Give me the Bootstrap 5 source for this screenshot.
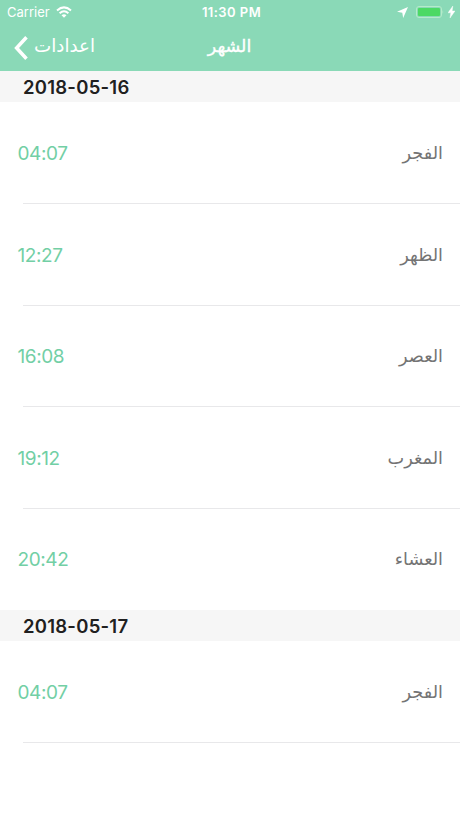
<!DOCTYPE html>
<html lang="ar">
<head>
<meta charset="utf-8">
<meta name="viewport" content="width=device-width, initial-scale=1">
<title>الشهر</title>
<link href="https://cdn.jsdelivr.net/npm/bootstrap@5.3.0/dist/css/bootstrap.min.css" rel="stylesheet">
<style>
body{font-family:Inter,"DejaVu Sans",sans-serif;background:#fff;height:818px;overflow:hidden}
.app-top{background:#8ad9b7;color:#fff;height:71px}
.status{height:24px;font-size:13px;line-height:24px;padding:0 5px 0 7px}
.status>div{flex:1 1 0}
.clock{font-weight:600;font-size:13px;letter-spacing:.45px;padding-left:1px}
.wifi{margin-left:6px}
.titlebar{height:47px;padding:0 15px 0 14px}
.titlebar>div{flex:1 1 0}
.ar{font-family:"DejaVu Sans",sans-serif;white-space:nowrap}
.back-label{font-size:18.3px;line-height:24px;margin:-3px 0 0 6px}
.screen-title{font-size:17.5px;font-weight:400;line-height:24px;-webkit-text-stroke:.35px #fff;padding-bottom:4px}
.day{height:31px;background:#f6f6f6;padding-left:23px;font-size:18.5px;font-weight:600;letter-spacing:.24px;line-height:32px;color:#202020;margin:0}
.prayer{height:101.5px;padding:2px 17px 0;position:relative}
.prayer-line::after{content:"";position:absolute;left:23px;right:0;bottom:-.5px;height:1px;background:#e8e8ea}
.hour{color:#72cfa5;font-size:19px;letter-spacing:-.4px;line-height:28px;padding-left:.5px}
.prayer .hour{padding-top:1px}
.name{color:#747474;font-size:17.7px;line-height:28px;padding-bottom:1px}
</style>
<script src="https://cdn.jsdelivr.net/npm/bootstrap@5.3.0/dist/js/bootstrap.bundle.min.js"></script>
</head>
<body>
<header class="app-top">
  <div class="status d-flex align-items-center">
    <div class="d-flex align-items-center"><span>Carrier</span>
      <svg class="wifi" width="16" height="12" viewBox="0 0 16 12" fill="none" stroke="#fff" stroke-width="2"><path d="M1 4.4Q8-1.6 15 4.4M3.6 7.2Q8 3.4 12.4 7.2"/><path d="M8 11.8 5.5 9.2Q8 7.2 10.5 9.2Z" fill="#fff" stroke="none"/></svg>
    </div>
    <span class="clock">11:30 PM</span>
    <div class="d-flex align-items-center justify-content-end">
      <svg class="me-2" width="11" height="11" viewBox="0 0 10 10"><path d="M10 0 5.6 10 4.8 5.3 0 4.4Z" fill="#fff"/></svg>
      <svg width="28" height="12" viewBox="0 0 28 12"><rect x=".5" y=".5" width="25" height="11" rx="2.5" fill="none" stroke="#b5ebc9"/><rect x="2" y="2" width="22" height="8" rx="1" fill="#4cd964"/><path d="M26.5 4q1.5 2 0 4Z" fill="#b5ebc9"/></svg>
      <svg class="ms-1" width="7" height="12" viewBox="0 0 7 12"><path d="M4.8 0 0 6.8H2.8L2 12 7 5H4.2Z" fill="#fff" stroke="#fff" stroke-width=".4"/></svg>
    </div>
  </div>
  <nav class="titlebar d-flex align-items-center" aria-label="اعدادات">
    <div class="d-flex align-items-center">
      <svg width="14" height="24" viewBox="0 0 14 24"><path d="M12.5 1.3 2.6 12 12.5 22.7" fill="none" stroke="#fff" stroke-width="3.5"/></svg>
      <span class="ar back-label" dir="rtl">اعدادات</span>
    </div>
    <h1 class="ar screen-title m-0" dir="rtl">الشهر</h1>
    <div></div>
  </nav>
</header>
<main>
  <section>
    <h2 class="day">2018-05-16</h2>
    <div class="prayer prayer-line d-flex align-items-center justify-content-between"><span class="hour">04:07</span><span class="name ar" dir="rtl">الفجر</span></div>
    <div class="prayer prayer-line d-flex align-items-center justify-content-between"><span class="hour">12:27</span><span class="name ar" dir="rtl">الظهر</span></div>
    <div class="prayer prayer-line d-flex align-items-center justify-content-between"><span class="hour">16:08</span><span class="name ar" dir="rtl">العصر</span></div>
    <div class="prayer prayer-line d-flex align-items-center justify-content-between"><span class="hour">19:12</span><span class="name ar" dir="rtl">المغرب</span></div>
    <div class="prayer d-flex align-items-center justify-content-between"><span class="hour">20:42</span><span class="name ar" dir="rtl">العشاء</span></div>
  </section>
  <section>
    <h2 class="day">2018-05-17</h2>
    <div class="prayer prayer-line d-flex align-items-center justify-content-between"><span class="hour">04:07</span><span class="name ar" dir="rtl">الفجر</span></div>
  </section>
</main>
</body>
</html>
